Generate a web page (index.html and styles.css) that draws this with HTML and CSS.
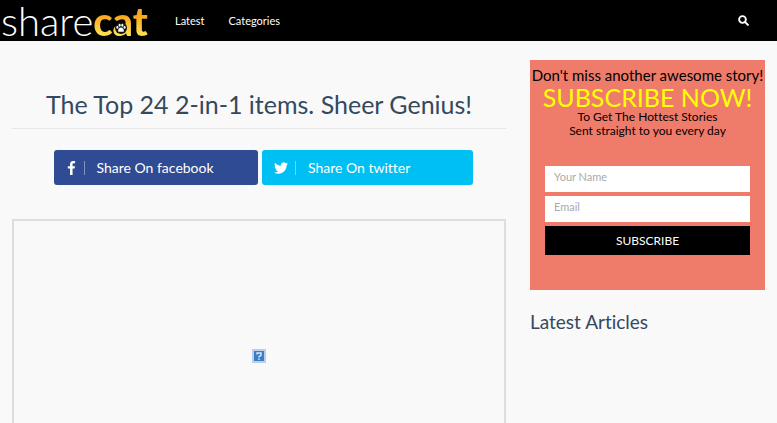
FILE: index.html
```
<!DOCTYPE html>
<html lang="en">
<head>
  <meta charset="UTF-8">
  <meta name="viewport" content="width=device-width, initial-scale=1.0">
  <title>The Top 24 2-in-1 items. Sheer Genius!</title>
  <link rel="stylesheet" href="styles.css">
</head>
<body>
  <header class="navbar">
    <a class="logo" href="#" aria-label="sharecat">
      <span class="logo-share">share</span><span class="logo-cat">cat</span>
      <svg class="logo-paw" viewBox="0 0 14 14" aria-hidden="true">
        <circle cx="7" cy="7" r="7" fill="#111"/>
        <g fill="#fff">
          <ellipse cx="2.8" cy="6.4" rx="1.2" ry="1.6"/>
          <ellipse cx="5.4" cy="3.8" rx="1.2" ry="1.7"/>
          <ellipse cx="8.6" cy="3.8" rx="1.2" ry="1.7"/>
          <ellipse cx="11.2" cy="6.4" rx="1.2" ry="1.6"/>
          <path d="M7 6.4c1.8 0 3.4 2.2 3.4 3.7 0 1.8-2 1.3-3.4 1.3s-3.4.5-3.4-1.3C3.6 8.6 5.2 6.4 7 6.4z"/>
        </g>
      </svg>
    </a>
    <nav class="nav-links">
      <a href="#">Latest</a>
      <a href="#">Categories</a>
    </nav>
    <button class="search-btn" type="button" aria-label="Search">
      <svg viewBox="0 0 12 12" fill="none" stroke="currentColor">
        <circle cx="4.9" cy="4.9" r="3.7" stroke-width="2"/>
        <path d="M7.8 7.8l3 3" stroke-width="2.2" stroke-linecap="round"/>
      </svg>
    </button>
  </header>

  <div class="page">
    <main class="content">
      <h1 class="title">The Top 24 2-in-1 items. Sheer Genius!</h1>

      <div class="share-buttons">
        <a class="share-btn facebook" href="#">
          <svg class="share-icon" viewBox="0 0 12 16" fill="currentColor">
            <path d="M10.4.2v2.500H8.900c-1.200 0-1.400.6-1.400 1.400V5.900h2.800l-.4 2.800H7.500V16H4.600V8.700H2.100V5.900h2.500V3.800C4.600 1.300 6.100 0 8.300 0c1 0 1.800.1 2.100.2z"/>
          </svg>
          <span class="share-label">Share On facebook</span>
        </a>
        <a class="share-btn twitter" href="#">
          <svg class="share-icon" viewBox="0 0 24 24" fill="currentColor">
            <path d="M23.950 4.570a10 10 0 0 1-2.820.77 4.960 4.960 0 0 0 2.160-2.720c-.95.55-2 .95-3.130 1.180a4.920 4.920 0 0 0-8.380 4.480C7.690 8.090 4.070 6.130 1.640 3.160a4.820 4.820 0 0 0-.67 2.480c0 1.710.87 3.210 2.190 4.100a4.900 4.900 0 0 1-2.230-.62v.06a4.920 4.920 0 0 0 3.950 4.830 5 5 0 0 1-2.210.08 4.940 4.940 0 0 0 4.600 3.420A9.870 9.870 0 0 1 0 19.540a13.990 13.990 0 0 0 7.550 2.210c9.050 0 14-7.500 14-13.980 0-.21 0-.42-.02-.63a9.940 9.940 0 0 0 2.420-2.570z"/>
          </svg>
          <span class="share-label">Share On twitter</span>
        </a>
      </div>

      <div class="article-image">
        <svg class="missing-icon" viewBox="0 0 14 14" role="img" aria-label="Missing image">
          <rect width="14" height="14" fill="#bccde8"/>
          <rect x="2" y="2" width="10" height="10" fill="#3a7fc4"/>
          <path d="M5 5.400V4h4v2.400L7 7.600V8.600M7 9.600v1.400" fill="none" stroke="#d8ecfa" stroke-width="1.400"/>
        </svg>
      </div>
    </main>

    <aside class="sidebar">
      <form class="subscribe">
        <p class="subscribe-lead">Don't miss another awesome story!</p>
        <p class="subscribe-title">SUBSCRIBE NOW!</p>
        <p class="subscribe-text">To Get The Hottest Stories<br>Sent straight to you every day</p>
        <div class="fields">
          <input type="text" placeholder="Your Name" aria-label="Your Name">
          <input type="email" placeholder="Email" aria-label="Email">
          <button type="submit">SUBSCRIBE</button>
        </div>
      </form>
      <h2 class="side-heading">Latest Articles</h2>
    </aside>
  </div>
</body>
</html>
```
FILE: styles.css
```
* {
  box-sizing: border-box;
}

body {
  margin: 0;
  font-family: Lato, "Liberation Sans", sans-serif;
  font-variant-ligatures: none;
  background: #f9f9f9;
  color: #34495e;
}

a {
  color: inherit;
  text-decoration: none;
}

.navbar {
  display: flex;
  align-items: center;
  height: 41px;
  padding-right: 28px;
  background: #000;
  color: #fff;
}

.logo {
  position: relative;
  display: flex;
  width: 152px;
  padding-left: 1px;
  font-size: 40px;
  line-height: 40px;
}

.logo-share {
  font-weight: 300;
}

.logo-cat {
  font-weight: 900;
  background: linear-gradient(#f9a51c 35%, #ffe14d 85%);
  -webkit-background-clip: text;
  background-clip: text;
  color: transparent;
}

/* paw sits in the bowl of the "a" */
.logo-paw {
  position: absolute;
  left: 115px;
  top: 21px;
  width: 12px;
  height: 12px;
}

.nav-links {
  display: flex;
  flex: 1;
  gap: 24px;
  padding-left: 23px;
  font-size: 11px;
}

.search-btn {
  display: flex;
  padding: 0;
  border: none;
  background: none;
  color: #fff;
  cursor: pointer;
}

.search-btn svg {
  width: 11px;
  height: 11px;
}

.page {
  display: grid;
  grid-template-columns: 2fr 1fr;
}

.content {
  padding: 47px 12px 0;
}

.title {
  margin: 0 0 21px;
  padding-bottom: 7px;
  border-bottom: 1px solid #e6e7ed;
  font-size: 25px;
  font-weight: 400;
  line-height: 33px;
  text-align: center;
}

.share-buttons {
  display: grid;
  grid-template-columns: 29fr 30fr;
  gap: 4px;
  padding: 0 33px 0 42px;
}

.share-btn {
  display: flex;
  align-items: center;
  height: 35px;
  padding-left: 12px;
  border-radius: 3px;
  color: #fff;
  font-size: 14px;
}

.facebook {
  background: #2f4b93;
}

.twitter {
  background: #00bff3;
}

.share-icon {
  height: 14px;
}

.share-label {
  display: flex;
  align-items: center;
}

.share-label::before {
  content: "";
  width: 1px;
  height: 14px;
  margin: 0 12px 0 7px;
  background: rgba(255, 255, 255, 0.4);
}

.article-image {
  display: flex;
  align-items: center;
  justify-content: center;
  min-height: 274px;
  margin-top: 34px;
  border: 2px solid #ddd;
}

.missing-icon {
  width: 14px;
  height: 14px;
}

.sidebar {
  padding: 19px 12px 0;
}

.subscribe {
  padding: 5px 0 35px;
  background: #ef7b6a;
  color: #000;
  text-align: center;
}

.subscribe p {
  margin: 0;
}

.subscribe-lead {
  font-size: 15px;
  line-height: 20px;
  white-space: nowrap;
}

.subscribe .subscribe-title {
  color: #ff0;
  font-size: 25px;
  line-height: 25px;
}

.subscribe-text {
  font-size: 12px;
  line-height: 14px;
}

.fields {
  display: flex;
  flex-direction: column;
  gap: 4px;
  padding: 28px 15px 0;
}

.fields input {
  width: 100%;
  height: 26px;
  padding: 0 9px 6px;
  border: none;
  border-radius: 0;
  background: #fff;
  font-family: inherit;
  font-size: 11px;
}

.fields input::placeholder {
  color: #aaa;
}

.fields button {
  height: 29px;
  border: none;
  background: #000;
  color: #fff;
  font-family: inherit;
  font-size: 12px;
  cursor: pointer;
}

.side-heading {
  margin: 20px 0 0;
  font-size: 19px;
  font-weight: 400;
  line-height: 24px;
}
```
